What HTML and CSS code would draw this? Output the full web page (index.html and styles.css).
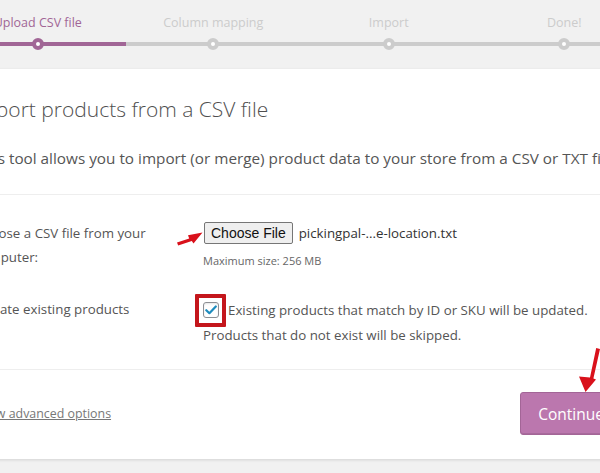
FILE: index.html
```html
<!DOCTYPE html>
<html lang="en">
<head>
<meta charset="utf-8">
<title>Import products</title>
<link rel="stylesheet" href="styles.css">
</head>
<body>
<div class="page">
  <ol class="steps">
    <li class="step active">Upload CSV file</li>
    <li class="step">Column mapping</li>
    <li class="step">Import</li>
    <li class="step">Done!</li>
  </ol>

  <div class="card">
    <header class="card-head">
      <h2 class="title">Import products from a CSV file</h2>
      <p class="intro">This tool allows you to import (or merge) product data to your store from a CSV or TXT file.</p>
    </header>

    <section class="fields">
      <div class="row">
        <div class="label">Choose a CSV file from your computer:</div>
        <div class="field">
          <div class="file-line">
            <svg class="arrow arrow-right" width="28" height="16" viewBox="0 0 28 16"><path d="M1 12.6 L13.2 8.6 L12 5.2 L26.5 2.5 L17.5 13.6 L15.8 10.9 L2.2 15.6 Z" fill="#d9111b"/></svg>
            <button class="file-btn" type="button">Choose File</button>
            <span class="file-name">pickingpal-...e-location.txt</span>
          </div>
          <div class="hint">Maximum size: 256 MB</div>
        </div>
      </div>
      <div class="row">
        <div class="label">Update existing products</div>
        <div class="field">
          <div class="check-line">
            <span class="mark-box"><span class="checkbox"><svg width="12" height="10" viewBox="0 0 12 10"><path d="M1.3 5.2 L4.4 8.2 L10.8 1.5" fill="none" stroke="#1e8cbe" stroke-width="2.2" stroke-linecap="round" stroke-linejoin="round"/></svg></span></span>
            <span class="check-text">Existing products that match by ID or SKU will be updated.</span>
          </div>
          <div class="check-text2">Products that do not exist will be skipped.</div>
        </div>
      </div>
    </section>

    <footer class="actions">
      <a class="advanced" href="#">Show advanced options</a>
      <span class="btn-wrap">
        <svg class="arrow arrow-down" width="24" height="48" viewBox="0 0 24 48"><path d="M24 3 L20.2 2 L14 31.5 L3 30.5 L9.5 46 L20 33.5 L17.4 32.6 Z" fill="#d9111b"/></svg>
        <button class="continue" type="button">Continue</button>
      </span>
    </footer>
  </div>
</div>
</body>
</html>
```

FILE: styles.css
```css
html, body {
  margin: 0;
  padding: 0;
  background: #f1f1f1;
  overflow: hidden;
}

body {
  width: 600px;
  height: 473px;
  font-family: "Open Sans", "Noto Sans", sans-serif;
  color: #555;
}

.page {
  margin-left: -50px;
  width: 720px;
}

/* progress steps */
.steps {
  list-style: none;
  margin: 0;
  padding: 0;
  display: grid;
  grid-template-columns: repeat(4, 175.5px);
}

.step {
  position: relative;
  text-align: center;
  font-size: 12.5px;
  line-height: 20px;
  color: #ccc;
  padding-top: 13px;
  padding-bottom: 9px;
  border-bottom: 4px solid #ccc;
}

.step::before {
  content: "";
  position: absolute;
  left: 50%;
  bottom: -8px;
  width: 4px;
  height: 4px;
  margin-left: -6px;
  border: 4px solid #ccc;
  border-radius: 50%;
  background: #fff;
}

.step.active {
  color: #a16696;
  border-bottom-color: #a16696;
}

.step.active::before {
  border-color: #a16696;
}

/* card */
.card {
  margin-top: 23px;
  background: #fff;
  box-shadow: 0 1px 3px rgba(0, 0, 0, 0.13);
  width: 720px;
}

.card-head {
  padding: 24px 0 24px 22px;
  border-bottom: 1px solid #eee;
}

.title {
  margin: 0;
  font-size: 21px;
  font-weight: 300;
  line-height: 32px;
  color: #4f4f4f;
}

.intro {
  margin: 21px 0 0 4px;
  font-size: 15.3px;
  line-height: 24px;
  color: #555;
  white-space: nowrap;
}

.fields {
  padding: 26px 0 22px 24px;
  border-bottom: 1px solid #eee;
  display: flex;
  flex-direction: column;
  gap: 28px;
}

.row {
  display: grid;
  grid-template-columns: 229px 1fr;
}

.label {
  font-size: 13.3px;
  line-height: 24px;
  width: 185px;
  color: #555;
}

.field {
  font-size: 13.3px;
  color: #555;
}

.file-line {
  display: flex;
  align-items: center;
  gap: 6px;
  height: 24px;
  position: relative;
}

.arrow-right {
  position: absolute;
  left: -27px;
  top: 9px;
}

.arrow {
  display: block;
}

.file-btn {
  font-family: "Liberation Sans", Arial, sans-serif;
  font-size: 14px;
  color: #111;
  background: #efefef;
  border: 1px solid #767676;
  border-radius: 2px;
  padding: 1px 6px;
  height: 22px;
  margin-left: 1px;
  line-height: 18px;
}

.file-name {
  font-size: 13.3px;
  color: #333;
}

.hint {
  font-size: 11px;
  line-height: 16px;
  margin-top: 8px;
  color: #666;
}

.check-line {
  display: flex;
  align-items: center;
  gap: 2px;
  height: 26px;
  margin-left: -8px;
}

.mark-box {
  display: inline-flex;
  align-items: center;
  justify-content: center;
  width: 23px;
  height: 25px;
  border: 4px solid #c4161c;
  border-radius: 1px;
}

.checkbox {
  display: inline-flex;
  align-items: center;
  justify-content: center;
  width: 14px;
  height: 14px;
  border: 1px solid #8c8f94;
  border-radius: 3px;
  background: #fff;
  box-shadow: inset 0 1px 2px rgba(0, 0, 0, 0.1);
}

.check-text {
  font-size: 13.3px;
  line-height: 26px;
  color: #555;
}

.check-text2 {
  font-size: 13.3px;
  line-height: 24px;
  color: #555;
}

.actions {
  display: flex;
  align-items: center;
  justify-content: space-between;
  padding: 22px 48px 24px 24px;
}

.advanced {
  font-size: 12.4px;
  color: #777;
  text-decoration: underline;
}

.btn-wrap {
  position: relative;
}

.arrow-down {
  position: absolute;
  left: 56px;
  top: -46px;
}

.continue {
  font-family: "Open Sans", "Noto Sans", sans-serif;
  font-size: 15.5px;
  color: #fff;
  background: #bb77ae;
  border: 1px solid #a36597;
  border-radius: 3px;
  height: 43px;
  padding: 0 17px;
  box-shadow: inset 0 -1px 0 rgba(0, 0, 0, 0.1);
}
```
